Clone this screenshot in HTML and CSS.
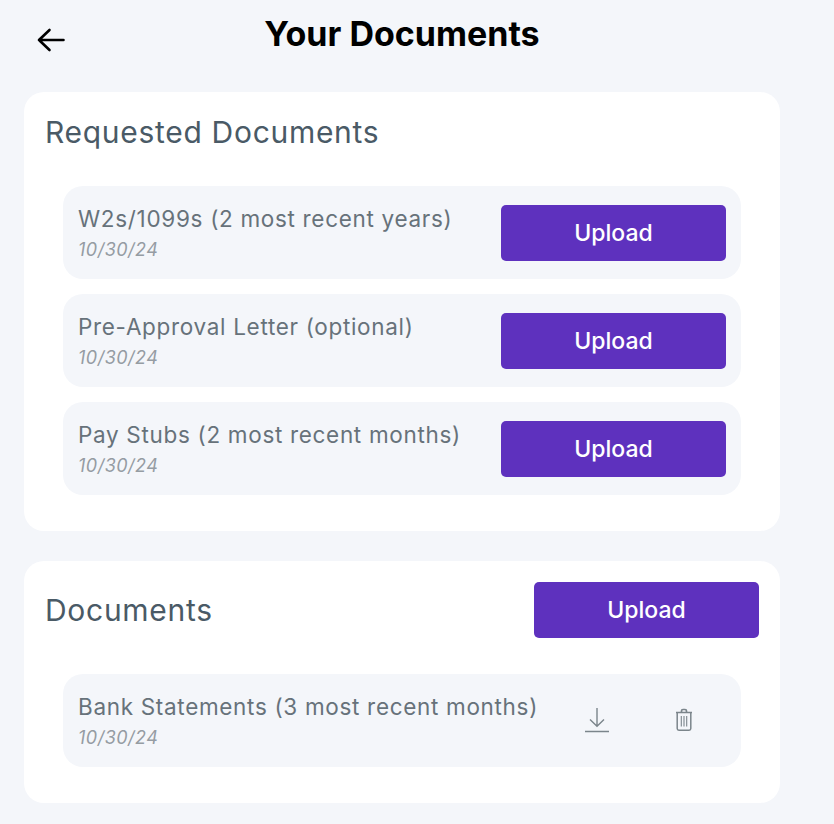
FILE: index.html
```html
<!DOCTYPE html>
<html lang="en">
<head>
<meta charset="utf-8">
<title>Your Documents</title>
<link rel="stylesheet" href="styles.css">
</head>
<body>
<main class="page">
  <header class="top">
    <svg class="back" viewBox="0 0 28 24" width="28" height="24" fill="none" stroke="#000" stroke-width="2.6" stroke-linecap="round" stroke-linejoin="round"><path d="M26.5 12H2M12.5 2 2 12l10.500 10"/></svg>
    <h1 class="title">Your Documents</h1>
  </header>
  <section class="card card-req">
    <h2 class="card-title">Requested Documents</h2>
    <div class="rows">
      <div class="row">
        <div class="info"><div class="name">W2s/1099s (2 most recent years)</div><div class="date">10/30/24</div></div>
        <button class="btn">Upload</button>
      </div>
      <div class="row">
        <div class="info"><div class="name">Pre-Approval Letter (optional)</div><div class="date">10/30/24</div></div>
        <button class="btn">Upload</button>
      </div>
      <div class="row">
        <div class="info"><div class="name">Pay Stubs (2 most recent months)</div><div class="date">10/30/24</div></div>
        <button class="btn">Upload</button>
      </div>
    </div>
  </section>
  <section class="card card-docs">
    <div class="docs-head">
      <h2 class="card-title">Documents</h2>
      <button class="btn">Upload</button>
    </div>
    <div class="rows">
      <div class="row row-doc">
        <div class="info"><div class="name">Bank Statements (3 most recent months)</div><div class="date">10/30/24</div></div>
        <div class="actions">
          <svg class="ico-dl" viewBox="0 0 26 26" width="26" height="26" fill="none" stroke="#7b858b" stroke-width="1.400"><path d="M13 1v18M6 12.500l7 6.800 7-6.800"/><path d="M1 24.500h24" stroke-width="1.500"/></svg>
          <svg class="ico-tr" viewBox="0 0 18 24" width="18" height="24" fill="none" stroke="#7b858b"><path stroke-width="1.700" d="M1 4.500h16M6.500 4V3q0-1.500 1.500-1.500h2q1.500 0 1.500 1.500v1"/><path stroke-width="1.500" d="M2.200 4.500V20.500q0 1.700 1.700 1.700h10.200q1.700 0 1.700-1.700V4.500"/><path stroke-width="1.100" d="M6.300 8v10.500M9 8v10.500M11.700 8v10.500"/></svg>
        </div>
      </div>
    </div>
  </section>
</main>
</body>
</html>
```
FILE: styles.css
```css
* { box-sizing: border-box; }
html, body { margin: 0; padding: 0; }
body { background: #f4f6fa; font-family: "Inter", "Liberation Sans", sans-serif; width: 834px; height: 824px; overflow: hidden; }
.page { padding: 0 54px 0 24px; display: flex; flex-direction: column; }
.top { height: 92px; position: relative; display: flex; justify-content: center; }
.back { position: absolute; left: 13px; top: 28px; }
.title { margin: 13px 0 0 0; font-size: 34px; line-height: 42px; font-weight: 700; color: #000; letter-spacing: 0; }
.card { background: #fff; border-radius: 20px; }
.card-req { height: 439px; padding: 20px 39px 0; margin-bottom: 30px; }
.card-docs { height: 242px; padding: 21px 21px 0 21px; }
.card-title { margin: 0; font-size: 30px; line-height: 40px; font-weight: 400; color: #4a5a66; letter-spacing: 0.7px; }
.card-req .card-title { margin-left: -18px; }
.rows { display: flex; flex-direction: column; gap: 15px; margin-top: 34px; }
.card-docs .rows { margin: 36px 18px 0 18px; }
.row { background: #f4f6fa; border-radius: 20px; height: 93px; padding: 0 15px; display: flex; align-items: center; justify-content: space-between; }
.info { display: flex; flex-direction: column; margin-top: 1px; }
.name { font-size: 22.5px; line-height: 30px; color: #67727a; letter-spacing: 0.68px; }
.date { font-size: 18px; line-height: 26px; font-style: italic; color: #959ca3; letter-spacing: 0.5px; margin-top: 3px; }
.btn { width: 225px; height: 56px; border: 0; border-radius: 5px; background: #5e31be; color: #fff; font: 500 23px/30px "Inter", "Liberation Sans", sans-serif; padding: 0; }
.docs-head { display: flex; justify-content: space-between; align-items: center; height: 56px; }
.actions { display: flex; align-items: center; gap: 65px; padding-right: 33px; margin-top: -2px; }
```
